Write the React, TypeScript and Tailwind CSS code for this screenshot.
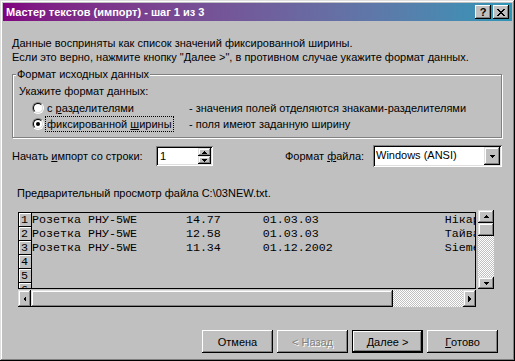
import React from "react";

const raised =
	"bg-[#c0c0c0] shadow-[inset_-1px_-1px_#000,inset_1px_1px_#fff,inset_-2px_-2px_#808080]";
const raisedScroll =
	"bg-[#c0c0c0] shadow-[inset_-1px_-1px_#000,inset_1px_1px_#dfdfdf,inset_-2px_-2px_#808080,inset_2px_2px_#fff]";
const sunken =
	"shadow-[inset_1px_1px_#808080,inset_-1px_-1px_#fff,inset_2px_2px_#000,inset_-2px_-2px_#dfdfdf]";
const dither =
	"bg-[image:repeating-conic-gradient(#c0c0c0_0_25%,#ffffff_0_50%)] bg-[length:2px_2px]";

function Arrow({ dir }: { dir: "up" | "down" | "left" | "right" }) {
	const pts = {
		up: "1,4 4,1 7,4",
		down: "1,1 4,4 7,1",
		left: "4,1 1,4 4,7",
		right: "1,1 4,4 1,7",
	}[dir];
	const vertical = dir === "up" || dir === "down";
	return (
		<svg
			width={vertical ? 8 : 5}
			height={vertical ? 5 : 8}
			viewBox={vertical ? "0 0 8 5" : "0 0 5 8"}
			shapeRendering="crispEdges"
		>
			<polygon points={pts} fill="#000" />
		</svg>
	);
}

function Radio({ checked }: { checked?: boolean }) {
	return (
		<span className="flex w-[12px] h-[12px] rounded-full border border-t-[#808080] border-l-[#808080] border-b-white border-r-white">
			<span className="flex flex-1 items-center justify-center rounded-full border border-t-black border-l-black border-b-[#dfdfdf] border-r-[#dfdfdf] bg-white">
				{checked && <span className="w-[4px] h-[4px] rounded-full bg-black" />}
			</span>
		</span>
	);
}

const rows = [
	["Розетка РНУ-5WE", "14.77", "01.03.03", "Hікарі"],
	["Розетка РНУ-5WE", "12.58", "01.03.03", "Тайвань"],
	["Розетка РНУ-5WE", "11.34", "01.12.2002", "Siemens"],
	null,
	null,
	null,
];

export default function App() {
	return (
		<div className="w-[515px] h-[361px] p-[3px] flex flex-col bg-[#c0c0c0] shadow-[inset_-1px_-1px_#000,inset_1px_1px_#dfdfdf,inset_-2px_-2px_#808080,inset_2px_2px_#fff] font-['Liberation_Sans',Arial,sans-serif] text-[11px] text-black leading-[14px]">
			{/* Title bar */}
			<div className="h-[18px] flex items-center pl-[3px] pr-[3px] bg-gradient-to-r from-[#800080] to-[#2a96b8]">
				<span className="flex-1 text-white font-bold text-[11px]">
					Мастер текстов (импорт) - шаг 1 из 3
				</span>
				<div className="flex gap-[2px]">
					<div className={`w-[16px] h-[14px] flex items-center justify-center font-bold text-[11px] leading-none ${raised}`}>
						?
					</div>
					<div className={`w-[16px] h-[14px] flex items-center justify-center ${raised}`}>
						<svg width="8" height="7" viewBox="0 0 8 7" shapeRendering="crispEdges">
							<path d="M0 0h2v1h-2zM6 0h2v1h-2zM1 1h2v1h-2zM5 1h2v1h-2zM2 2h4v1h-4zM3 3h2v1h-2zM2 4h4v1h-4zM1 5h2v1h-2zM5 5h2v1h-2zM0 6h2v1h-2zM6 6h2v1h-2z" fill="#000" />
						</svg>
					</div>
				</div>
			</div>

			<div className="flex flex-col pl-[9px]">
				<p className="mt-[15px]">
					Данные восприняты как список значений фиксированной ширины.
					<br />
					Если это верно, нажмите кнопку "Далее &gt;", в противном случае укажите формат данных.
				</p>

				{/* Group box */}
				<div className="relative mt-[10px] h-[64px] w-[490px] border border-[#808080] shadow-[inset_1px_1px_#fff,1px_1px_#fff] pt-[9px] pl-[6px]">
					<span className="absolute -top-[7px] left-[3px] px-[1px] bg-[#c0c0c0] leading-[13px]">
						Формат исходных данных
					</span>
					<div>Укажите формат данных:</div>
					<div className="mt-[2px] flex items-center h-[16px]">
						<div className="w-[170px] flex items-center">
							<span className="ml-[13px]"><Radio /></span>
							<span className="ml-[1px] px-[1px] border border-transparent leading-[14px]">
								с <u>р</u>азделителями
							</span>
						</div>
						<span>- значения полей отделяются знаками-разделителями</span>
					</div>
					<div className="flex items-center h-[16px]">
						<div className="w-[170px] flex items-center">
							<span className="ml-[13px]"><Radio checked /></span>
							<span className="ml-[1px] px-[1px] border border-dotted border-black leading-[14px]">
								фиксированной <u>ш</u>ирины
							</span>
						</div>
						<span>- поля имеют заданную ширину</span>
					</div>
				</div>

				{/* Start row / file format */}
				<div className="mt-[7px] h-[22px] flex items-center">
					<span className="w-[144px]">
						Начать <u>и</u>мпорт со строки:
					</span>
					<div className={`w-[57px] h-[20px] p-[2px] flex bg-white ${sunken}`}>
						<span className="flex-1 pl-[2px] leading-[16px]">1</span>
						<div className="w-[13px] flex flex-col">
							<div className={`h-[8px] flex items-center justify-center ${raisedScroll}`}>
								<svg width="5" height="3" viewBox="0 0 5 3" shapeRendering="crispEdges"><polygon points="0,3 2.5,0 5,3" fill="#000" /></svg>
							</div>
							<div className={`h-[8px] flex items-center justify-center ${raisedScroll}`}>
								<svg width="5" height="3" viewBox="0 0 5 3" shapeRendering="crispEdges"><polygon points="0,0 2.5,3 5,0" fill="#000" /></svg>
							</div>
						</div>
					</div>
					<span className="ml-[72px] w-[88px]">
						Формат <u>ф</u>айла:
					</span>
					<div className={`w-[129px] h-[22px] p-[2px] flex bg-white ${sunken}`}>
						<span className="flex-1 pl-[1px] leading-[17px]">Windows (ANSI)</span>
						<div className={`w-[16px] flex items-center justify-center ${raisedScroll}`}>
							<Arrow dir="down" />
						</div>
					</div>
				</div>

				<p className="mt-[19px] ml-[5px]">
					Предварительный просмотр файла C:\03NEW.txt.
				</p>

				{/* Preview */}
				<div className="mt-[10px] ml-[6px] flex gap-[2px] items-start">
					<div className="mt-[2px] flex flex-col">
						<div className="w-[458px] h-[77px] border border-black overflow-hidden bg-[#c0c0c0] font-['Liberation_Mono',monospace] text-[11.67px] leading-[14px]">
							{rows.map((r, i) => (
								<div key={i} className="flex h-[14px]">
									<div className="w-[13px] h-[14px] shrink-0 pl-[2px] border-r border-b border-black shadow-[inset_1px_1px_#fff]">
										{i + 1}
									</div>
									{r && (
										<span className="whitespace-pre">
											{r[0].padEnd(22) + r[1].padEnd(11) + r[2].padEnd(26) + r[3]}
										</span>
									)}
								</div>
							))}
						</div>
						<div className="mt-[1px] h-[17px] w-[458px] flex">
							<div className={`w-[13px] flex items-center justify-center ${raisedScroll}`}>
								<Arrow dir="left" />
							</div>
							<div className={`w-[362px] ${raisedScroll}`} />
							<div className={`flex-1 ${dither}`} />
							<div className={`w-[13px] flex items-center justify-center ${raisedScroll}`}>
								<Arrow dir="right" />
							</div>
						</div>
					</div>
					<div className="w-[16px] h-[79px] flex flex-col">
						<div className={`h-[13px] flex items-center justify-center ${raisedScroll}`}>
							<Arrow dir="up" />
						</div>
						<div className={`h-[13px] ${raisedScroll}`} />
						<div className={`flex-1 ${dither}`} />
						<div className={`h-[12px] flex items-center justify-center ${raisedScroll}`}>
							<Arrow dir="down" />
						</div>
					</div>
				</div>
			</div>

			{/* Buttons */}
			<div className="mt-[23px] flex justify-end gap-[4px] pr-[14px]">
				<button className={`w-[71px] h-[23px] flex items-center justify-center ${raised}`}>
					Отмена
				</button>
				<button className={`w-[71px] h-[23px] flex items-center justify-center text-[#808080] [text-shadow:1px_1px_#fff] ${raised}`}>
					&lt; Назад
				</button>
				<div className="w-[71px] h-[23px] border border-black flex">
					<button className={`flex-1 flex items-center justify-center ${raised}`}>
						Далее &gt;
					</button>
				</div>
				<button className={`w-[71px] h-[23px] flex items-center justify-center ${raised}`}>
					<u>Г</u>отово
				</button>
			</div>
		</div>
	);
}
